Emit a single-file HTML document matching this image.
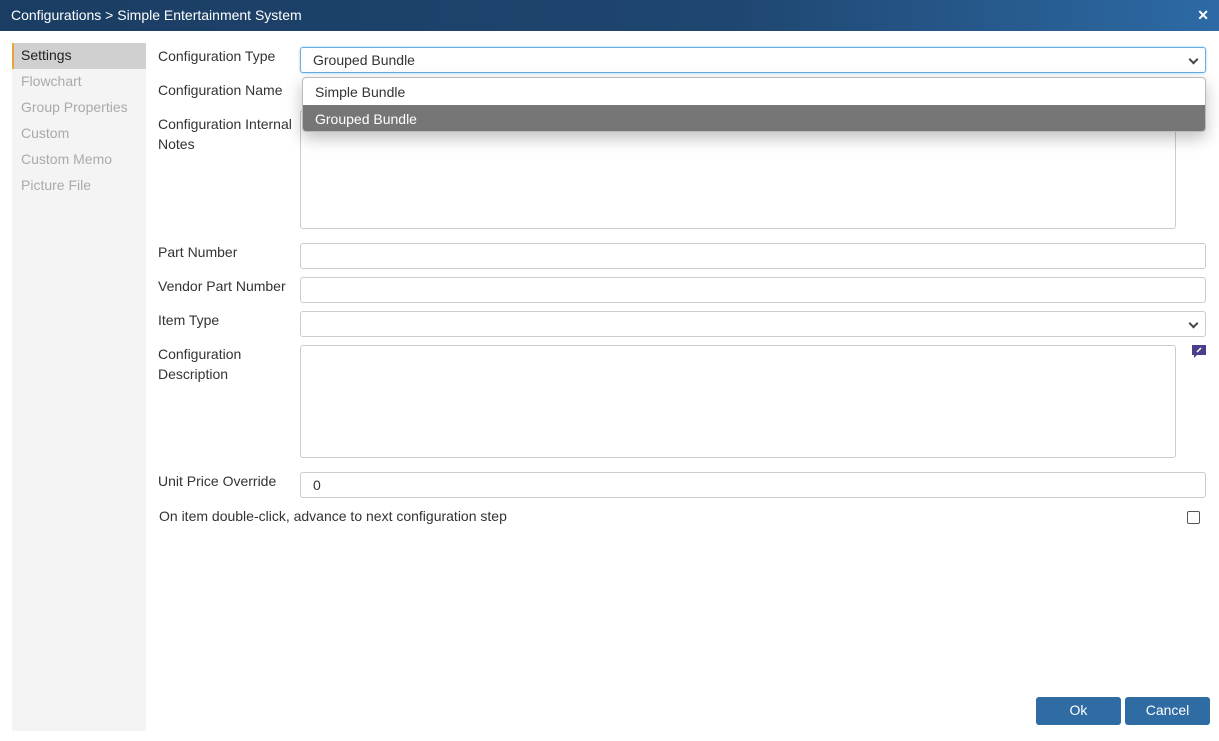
<!DOCTYPE html>
<html><head><style>
*{box-sizing:border-box}
body{margin:0;width:1219px;height:741px;background:#fff;font-family:"Liberation Sans",sans-serif;font-size:14px;color:#333;position:relative;overflow:hidden}
.title{position:absolute;left:0;top:0;width:1219px;height:31px;background:linear-gradient(90deg,#1a3d63 0%,#1f4670 60%,#2d6aa5 100%);color:#fff;font-size:14px;line-height:30px;padding-left:11px}
.x{position:absolute;right:10px;top:0;font-weight:bold;font-size:14px}
.side{position:absolute;left:12px;top:43px;width:134px;height:688px;background:#f4f4f4}
.side div{height:26px;line-height:24px;padding-left:9px;color:#aaa}
.side .on{background:#d0d0d0;color:#222;border-left:2px solid #e8a53a;padding-left:7px}
.lbl{position:absolute;left:158px;line-height:20px}
.in{position:absolute;left:300px;width:906px;height:26px;border:1px solid #ccc;border-radius:3px;background:#fff;padding-left:12px;line-height:24px}
.ta{position:absolute;left:300px;width:876px;border:1px solid #ccc;border-radius:3px}
.chev{position:absolute;right:8px;top:8px;width:7px;height:7px;border-right:2px solid #444;border-bottom:2px solid #444;transform:rotate(45deg)}
.dd{position:absolute;left:302px;top:77px;width:904px;height:55px;background:#fff;border:1px solid #bbb;border-radius:4px;box-shadow:0 6px 16px rgba(0,0,0,.25);overflow:hidden}
.dd div{height:27px;line-height:28px;padding-left:12px}
.btn{position:absolute;top:697px;height:28px;background:#2f6ca3;color:#fff;text-align:center;line-height:27px;border-radius:3px}
</style></head><body>
<div class="title">Configurations &gt; Simple Entertainment System<span class="x">✕</span></div>
<div class="side"><div class="on">Settings</div><div>Flowchart</div><div>Group Properties</div><div>Custom</div><div>Custom Memo</div><div>Picture File</div></div>
<div class="lbl" style="top:46px">Configuration Type</div>
<div class="lbl" style="top:80px">Configuration Name</div>
<div class="lbl" style="top:114px">Configuration Internal<br>Notes</div>
<div class="lbl" style="top:242px">Part Number</div>
<div class="lbl" style="top:276px">Vendor Part Number</div>
<div class="lbl" style="top:310px">Item Type</div>
<div class="lbl" style="top:344px">Configuration<br>Description</div>
<div class="lbl" style="top:471px">Unit Price Override</div>
<div class="lbl" style="top:506px;left:159px">On item double-click, advance to next configuration step</div>
<div class="in" style="top:47px;border-color:#66aee8;box-shadow:0 0 2px #9cc9ef">Grouped Bundle<span class="chev"></span></div>
<div class="ta" style="top:110px;height:119px"></div>
<div class="dd"><div>Simple Bundle</div><div style="background:#767676;color:#fff">Grouped Bundle</div></div>
<div class="in" style="top:243px"></div>
<div class="in" style="top:277px"></div>
<div class="in" style="top:311px"><span class="chev"></span></div>
<div class="ta" style="top:345px;height:113px"></div>
<svg style="position:absolute;left:1192px;top:345px" width="14" height="13"><rect x="0" y="0" width="14" height="10" fill="#4b3f8c"/><path d="M2 10 L2 13 L5 10Z" fill="#4b3f8c"/><path d="M5 7 L9 3" stroke="#fff" stroke-width="1.5"/></svg>
<div class="in" style="top:472px">0</div>
<div style="position:absolute;left:1187px;top:511px;width:13px;height:13px;border:1px solid #555;border-radius:2px"></div>
<div class="btn" style="left:1036px;width:85px">Ok</div>
<div class="btn" style="left:1125px;width:85px">Cancel</div>
</body></html>
